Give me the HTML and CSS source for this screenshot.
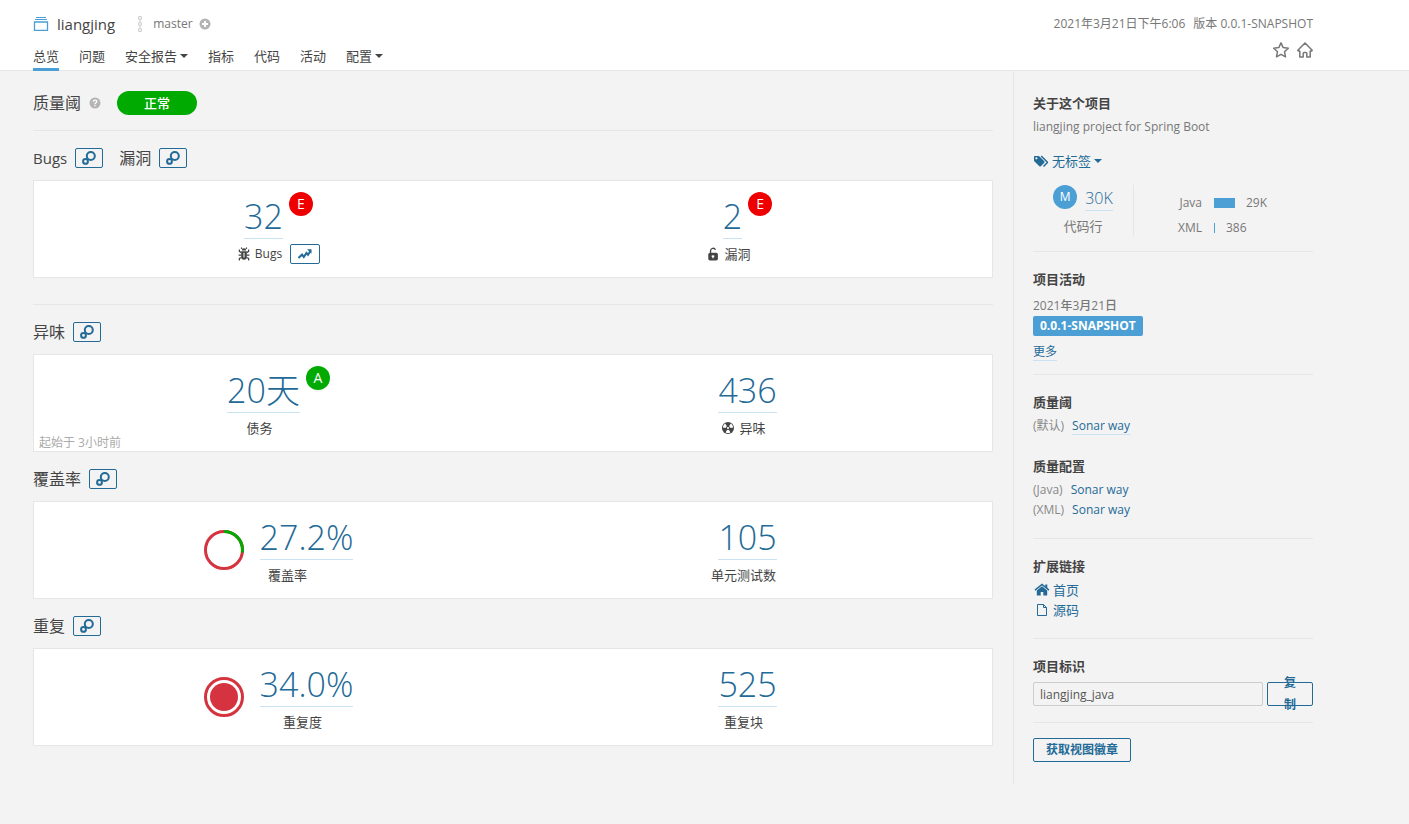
FILE: index.html
```html
<!DOCTYPE html>
<html lang="zh-CN">
<head>
<meta charset="utf-8">
<title>liangjing</title>
<link rel="stylesheet" href="styles.css">
</head>
<body>
<svg class="defs" aria-hidden="true">
  <symbol id="i-link" viewBox="0 0 16 16"><g fill="none" stroke="currentColor" stroke-width="2"><circle cx="9.8" cy="6" r="4"/><circle cx="4.500" cy="11.400" r="2.400"/></g></symbol>
  <symbol id="i-caret" viewBox="0 0 8 4"><path d="M0 0h8L4 4z" fill="currentColor"/></symbol>
</svg>
<header class="top">
  <div class="top-inner">
    <div class="top-left">
      <div class="brand">
        <svg class="ic-project" viewBox="0 0 16 14" fill="none" stroke="#4b9fd5"><path d="M3 .5h10M2 2.500h12"/><path d="M1.500 5h13v8.300h-13z" stroke-width="1.300"/></svg>
        <a class="brand-name" href="#">liangjing</a>
        <svg class="ic-branch" viewBox="0 0 6 16" fill="none" stroke="#cdcdcd" stroke-width="1.200"><circle cx="3" cy="2" r="1.500"/><circle cx="3" cy="8" r="1.500"/><circle cx="3" cy="14" r="1.500"/><path d="M3 3.500v3M3 9.500v3"/></svg>
        <span class="branch">master</span>
        <svg class="ic-plus" viewBox="0 0 12 12"><circle cx="6" cy="6" r="5.500" fill="#b4b4b4"/><path d="M6 3v6M3 6h6" stroke="#fff" stroke-width="2"/></svg>
      </div>
      <nav class="tabs">
        <a class="tab active" href="#">总览</a>
        <a class="tab" href="#">问题</a>
        <button class="tab" type="button">安全报告<svg class="caret"><use href="#i-caret"/></svg></button>
        <a class="tab" href="#">指标</a>
        <a class="tab" href="#">代码</a>
        <a class="tab" href="#">活动</a>
        <button class="tab" type="button">配置<svg class="caret"><use href="#i-caret"/></svg></button>
      </nav>
    </div>
    <div class="top-right">
      <div class="meta"><span>2021年3月21日下午6:06</span><span>版本 0.0.1-SNAPSHOT</span></div>
      <div class="actions">
        <button class="icon-btn" type="button" aria-label="收藏"><svg viewBox="0 0 16 16" fill="none" stroke="#777" stroke-width="1.500" stroke-linejoin="round"><path d="M8 .9l2.200 4.700 5.100.6-3.800 3.500 1 5.100L8 12.300l-4.500 2.500 1-5.100L.7 6.200l5.100-.6z"/></svg></button>
        <button class="icon-btn" type="button" aria-label="主页"><svg viewBox="0 0 16 16" fill="none" stroke="#777" stroke-width="1.500" stroke-linejoin="round"><path d="M8 1L.8 8.300l.6.6h1.400v6.200h3.400v-3.700q0-1 1-1h1.600q1 0 1 1v3.700h3.400V8.900h1.400l.6-.6z"/></svg></button>
      </div>
    </div>
  </div>
</header>

<div class="page">
  <main class="main">
    <div class="gate">
      <h1 class="title">质量阈</h1>
      <svg class="ic-help" viewBox="0 0 12 12"><circle cx="6" cy="6" r="5.500" fill="#b4b4b4"/><path d="M4.300 4.800q.1-1.600 1.800-1.600t1.700 1.400q0 .8-1 1.300-.8.4-.8 1M6 7.800v1.400" fill="none" stroke="#fff" stroke-width="1.300"/></svg>
      <span class="level">正常</span>
    </div>

    <section class="domain ruled">
      <div class="domain-head">
        <h2 class="title latin">Bugs</h2>
        <a class="box-link" href="#" aria-label="Bugs"><svg><use href="#i-link"/></svg></a>
        <h2 class="title second">漏洞</h2>
        <a class="box-link" href="#" aria-label="漏洞"><svg><use href="#i-link"/></svg></a>
      </div>
      <div class="card">
        <div class="measure">
          <div class="value"><a class="num" href="#">32</a><span class="rating bad">E</span></div>
          <div class="label wide">
            <svg class="ic" viewBox="0 0 16 16"><path d="M5.500 4a2.500 2.500 0 0 1 5 0z M4.800 4.800h6.400v6.700a3.200 3.200 0 0 1-6.400 0z" fill="#444"/><path d="M5.800 2L4.700.6M10.200 2L11.300.6M5 6.500L2.700 5V2.800M11 6.500L13.300 5V2.800M5 9.300H1.800M11 9.300h3.200M5 12l-2.300 1v2.500M11 12l2.300 1v2.500" fill="none" stroke="#444" stroke-width="1.400"/><path d="M8 6.500v5.500" stroke="#fff" stroke-width="1.200"/></svg>
            <span class="small">Bugs</span>
            <button class="box-link trend" type="button" aria-label="历史"><svg viewBox="0 0 16 12"><path d="M1.500 10L5 6.500l1.800 2.500L9.500 5l1.500 1.800L13.500 3" fill="none" stroke="currentColor" stroke-width="2"/><path d="M10 1.200h4.500v4.500z" fill="currentColor"/></svg></button>
          </div>
        </div>
        <div class="measure">
          <div class="value"><a class="num" href="#">2</a><span class="rating bad">E</span></div>
          <div class="label no-history">
            <svg class="ic" viewBox="0 0 16 16"><path d="M5.200 7V4.200a2.900 2.900 0 0 1 5.600-.9" fill="none" stroke="#444" stroke-width="1.500"/><rect x="2.600" y="6.500" width="11" height="9" rx="2" fill="#444"/><path d="M8 9.300v3.500M6.500 10.600h3" stroke="#fff" stroke-width="1.500"/></svg>
            <span>漏洞</span>
          </div>
        </div>
      </div>
    </section>

    <section class="domain">
      <div class="domain-head">
        <h2 class="title">异味</h2>
        <a class="box-link" href="#" aria-label="异味"><svg><use href="#i-link"/></svg></a>
      </div>
      <div class="card">
        <div class="measure">
          <div class="value"><a class="num" href="#">20天</a><span class="rating good">A</span></div>
          <div class="label no-history"><span>债务</span></div>
        </div>
        <div class="measure">
          <div class="value"><a class="num" href="#">436</a></div>
          <div class="label">
            <svg class="ic" viewBox="0 0 16 16"><circle cx="8" cy="8" r="6.900" fill="#444"/><g fill="#fff"><path d="M6.800 6.100L4.700 2.800A6 6 0 0 0 2.200 7.600h3.600q.1-1 1-1.500zM9.200 6.100l2.100-3.300a6 6 0 0 1 2.500 4.800h-3.600q-.1-1-1-1.500zM7 10.100l-1.800 3a6 6 0 0 0 5.600 0l-1.800-3q-1 .5-2 0z"/></g><circle cx="8" cy="8" r="1.200" fill="#fff"/></svg>
            <span>异味</span>
          </div>
        </div>
        <div class="since">起始于 3小时前</div>
      </div>
    </section>

    <section class="domain">
      <div class="domain-head">
        <h2 class="title">覆盖率</h2>
        <a class="box-link" href="#" aria-label="覆盖率"><svg><use href="#i-link"/></svg></a>
      </div>
      <div class="card">
        <div class="measure with-chart">
          <svg class="chart" viewBox="0 0 40 40" fill="none" stroke-width="3"><circle cx="20" cy="20" r="18.500" stroke="#d4333f"/><circle cx="20" cy="20" r="18.500" stroke="#0a0" pathLength="100" stroke-dasharray="27.200 72.800" transform="rotate(-90 20 20)"/></svg>
          <div>
            <div class="value"><a class="num" href="#">27.2%</a></div>
            <div class="label no-history"><span>覆盖率</span></div>
          </div>
        </div>
        <div class="measure">
          <div class="value"><a class="num" href="#">105</a></div>
          <div class="label"><span>单元测试数</span></div>
        </div>
      </div>
    </section>

    <section class="domain">
      <div class="domain-head">
        <h2 class="title">重复</h2>
        <a class="box-link" href="#" aria-label="重复"><svg><use href="#i-link"/></svg></a>
      </div>
      <div class="card">
        <div class="measure with-chart">
          <svg class="chart" viewBox="0 0 40 40"><circle cx="20" cy="20" r="18.500" fill="none" stroke="#d4333f" stroke-width="3"/><circle cx="20" cy="20" r="14" fill="#d4333f"/></svg>
          <div>
            <div class="value"><a class="num" href="#">34.0%</a></div>
            <div class="label"><span>重复度</span></div>
          </div>
        </div>
        <div class="measure">
          <div class="value"><a class="num" href="#">525</a></div>
          <div class="label"><span>重复块</span></div>
        </div>
      </div>
    </section>
  </main>

  <aside class="side">
    <section class="block">
      <h3>关于这个项目</h3>
      <p class="desc">liangjing project for Spring Boot</p>
      <button class="tags" type="button"><svg class="ic-tags" viewBox="0 0 16 14"><path d="M1 2.800Q1 2 1.800 2h3.500q.7 0 1.200.5l4.800 4.800q.7.700 0 1.400l-3.500 3.500q-.7.700-1.400 0L1.500 7.500Q1 7 1 6.300z" fill="currentColor"/><circle cx="3.400" cy="4.300" r="1.100" fill="#f3f3f3"/><path d="M8.200 2l6 6q.4.400 0 .8L10.500 12.500" fill="none" stroke="currentColor" stroke-width="1.500"/></svg>无标签<svg class="caret"><use href="#i-caret"/></svg></button>
      <div class="size">
        <div class="size-main">
          <div class="size-value"><span class="size-badge">M</span><a href="#">30K</a></div>
          <div>代码行</div>
        </div>
        <div class="langs">
          <div class="lang"><span class="lang-name">Java</span><span class="bar" style="width:21px"></span><span>29K</span></div>
          <div class="lang"><span class="lang-name">XML</span><span class="bar" style="width:1px"></span><span>386</span></div>
        </div>
      </div>
    </section>
    <section class="block activity">
      <h3>项目活动</h3>
      <div class="date">2021年3月21日</div>
      <div><span class="version">0.0.1-SNAPSHOT</span></div>
      <div class="more"><a class="under" href="#">更多</a></div>
    </section>
    <section class="block roomy">
      <h3>质量阈</h3>
      <div class="row"><span class="note">(默认)</span><a class="under" href="#">Sonar way</a></div>
      <h3 class="again">质量配置</h3>
      <div class="row"><span class="note">(Java)</span><a href="#">Sonar way</a></div>
      <div class="row"><span class="note">(XML)</span><a href="#">Sonar way</a></div>
    </section>
    <section class="block roomy">
      <h3>扩展链接</h3>
      <a class="ext" href="#"><svg viewBox="0 0 16 16"><path d="M8 4.200L2.800 8.500V13q0 .6.600.600h3.300V10h2.600v3.600h3.300q.6 0 .6-.6V8.500z" fill="currentColor"/><path d="M1 8.200L8 2.400l7 5.800" fill="none" stroke="currentColor" stroke-width="1.500"/><path d="M11.300 2.500h2v4l-2-1.700z" fill="currentColor"/></svg>首页</a>
      <a class="ext" href="#"><svg viewBox="0 0 16 16" fill="none" stroke="currentColor"><path d="M3.500 2.500h6l3 3v8h-9zM9.500 2.500v3h3"/></svg>源码</a>
    </section>
    <section class="block">
      <h3><label for="project-key">项目标识</label></h3>
      <div class="key"><input id="project-key" type="text" value="liangjing_java" readonly><button class="button copy" type="button"><span>复制</span></button></div>
    </section>
    <section class="block last">
      <button class="button" type="button">获取视图徽章</button>
    </section>
  </aside>
</div>
</body>
</html>
```
FILE: styles.css
```css
* { box-sizing: border-box; }

body {
  margin: 0;
  background: #f3f3f3;
  color: #444;
  font: 13px/20px "Open Sans", "Noto Sans CJK SC", sans-serif;
}

a { color: #236a97; text-decoration: none; }
h1, h2, h3, p { margin: 0; }
svg { display: block; flex: none; }
button { font: inherit; cursor: pointer; }
.defs { position: absolute; width: 0; height: 0; }

.top { background: #fff; border-bottom: 1px solid #e6e6e6; }
.top-inner, .page { display: flex; max-width: 1313px; padding-left: 33px; }
.top-inner { justify-content: space-between; }

.brand { display: flex; align-items: center; height: 24px; margin-top: 12px; }
.ic-project { width: 16px; height: 14px; }
.brand-name { margin: 0 22px 0 8px; color: #444; font-size: 15px; }
.ic-branch { width: 6px; height: 16px; }
.branch { margin: 0 6px 0 10px; color: #777; font-size: 12px; }
.ic-plus, .ic-help { width: 12px; height: 12px; }

.tabs { display: flex; gap: 20px; margin: 10px 0 -1px; }
.tab {
  display: flex;
  align-items: center;
  padding: 0 0 2px;
  border: 0;
  border-bottom: 3px solid transparent;
  background: none;
  color: #444;
}
.tab.active { border-bottom-color: #4b9fd5; }
.caret { width: 8px; height: 4px; margin-left: 3px; }

.top-right { display: flex; flex-direction: column; align-items: flex-end; gap: 8px; padding-top: 14px; }
.meta { display: flex; gap: 8px; color: #777; font-size: 12px; }
.actions { display: flex; gap: 8px; }
.icon-btn { padding: 0; border: 0; background: none; }
.icon-btn svg { width: 16px; height: 16px; }

.main { flex: 1; padding: 20px 20px 38px 0; }
.gate { display: flex; align-items: center; height: 24px; margin-bottom: 15px; }
.title { font-size: 16px; font-weight: 400; line-height: 20px; }
.title.latin { font-size: 15px; }
.title.second { margin-left: 16px; }
.ic-help { margin: 0 16px 0 8px; }
.level {
  width: 80px;
  border-radius: 12px;
  background: #0a0;
  color: #fff;
  font-weight: 500;
  line-height: 24px;
  text-align: center;
}

.domain { padding-top: 17px; }
.domain.ruled { padding-bottom: 26px; border: 1px solid #e6e6e6; border-width: 1px 0; }
.domain-head { display: flex; align-items: center; height: 20px; margin-bottom: 12px; }
.box-link {
  display: flex;
  align-items: center;
  justify-content: center;
  width: 28px;
  height: 20px;
  margin-left: 8px;
  padding: 0;
  border: 1px solid #236a97;
  border-radius: 2px;
  background: none;
  color: #236a97;
}
.box-link svg { width: 16px; height: 16px; }
.trend { width: 30px; }
.trend svg { height: 12px; }

.card {
  position: relative;
  display: flex;
  padding: 11px 10px 13px;
  border: 1px solid #e6e6e6;
  background: #fff;
}
.measure { flex: 1; }
.with-chart { display: flex; align-items: center; justify-content: center; gap: 16px; }
.chart { width: 40px; height: 40px; margin-top: 2px; }
.value { display: flex; justify-content: center; gap: 6px; height: 47px; margin-bottom: 5px; }
.num {
  padding-top: 2px;
  border-bottom: 1px solid #cae3f2;
  font-size: 34px;
  font-weight: 300;
  line-height: 44px;
}
.rating {
  width: 24px;
  height: 24px;
  border-radius: 50%;
  color: #fff;
  font-size: 14px;
  line-height: 24px;
  text-align: center;
}
.bad { background: #e00; }
.good { background: #0a0; }
.label { display: flex; align-items: center; justify-content: center; height: 20px; padding-right: 8px; }
.label.wide { padding-right: 0; }
.label.no-history { padding-right: 38px; }
.ic { width: 14px; height: 14px; margin-right: 4px; }
.small { font-size: 12px; }
.since { position: absolute; left: 5px; bottom: -2px; color: #aaa; font-size: 12px; }

.side { width: 300px; padding: 5px 0 0 19px; border-left: 1px solid #e6e6e6; color: #777; }
.block { padding: 17px 0 15px; border-bottom: 1px solid #e6e6e6; }
.block.activity { padding-bottom: 12px; }
.block.roomy { padding-bottom: 18px; }
.block.last { padding: 15px 0 20px; border: 0; }
h3 { margin-bottom: 4px; color: #444; font-size: 13px; font-weight: 600; }
h3.again { margin-top: 20px; }
.desc { margin-bottom: 14px; font-size: 12px; }
.tags { display: flex; align-items: center; padding: 0; border: 0; background: none; color: #236a97; }
.ic-tags { width: 16px; height: 14px; margin-right: 3px; }
.size { display: flex; margin-top: 14px; }
.size-main { width: 101px; height: 51px; border-right: 1px solid #e6e6e6; text-align: center; }
.size-value { display: flex; justify-content: center; gap: 8px; height: 26px; margin-bottom: 5px; }
.size-value a { border-bottom: 1px solid #cae3f2; font-size: 16px; font-weight: 300; line-height: 26px; }
.size-badge { width: 24px; height: 24px; border-radius: 50%; background: #4b9fd5; color: #fff; font-size: 12px; line-height: 24px; }
.langs { display: grid; gap: 9px; align-content: start; padding-top: 10px; font-size: 12px; line-height: 16px; }
.lang { display: flex; align-items: center; }
.lang-name { width: 68px; margin-right: 12px; text-align: right; }
.bar { height: 10px; margin-right: 11px; background: #4b9fd5; }
.date { margin-top: 7px; font-size: 12px; font-weight: 500; }
.version {
  display: block;
  width: fit-content;
  padding: 0 7px;
  border-radius: 2px;
  background: #4b9fd5;
  color: #fff;
  font-size: 12px;
  font-weight: 700;
}
.more { margin-top: 6px; font-size: 12px; }
.under { border-bottom: 1px solid #cae3f2; line-height: 16px; }
.row { display: flex; align-items: center; gap: 8px; height: 20px; font-size: 12px; }
.note { color: #888; font-size: 12px; }
.ext { display: flex; align-items: center; gap: 3px; }
.ext svg { width: 16px; height: 16px; margin-left: 1px; }
.key { display: flex; gap: 4px; margin: 6px 0 1px; }
.key input {
  flex: 1;
  min-width: 0;
  height: 24px;
  padding: 0 6px;
  border: 1px solid #cdcdcd;
  border-radius: 2px;
  background: #f3f3f3;
  color: #555;
  font: 12px "Open Sans", sans-serif;
}
.button {
  height: 24px;
  padding: 0 12px;
  border: 1px solid #236a97;
  border-radius: 2px;
  background: none;
  color: #236a97;
  font-size: 12px;
  font-weight: 600;
  line-height: 22px;
}
.copy { display: flex; align-items: center; justify-content: center; width: 46px; }
.copy span { width: 12px; }
```
